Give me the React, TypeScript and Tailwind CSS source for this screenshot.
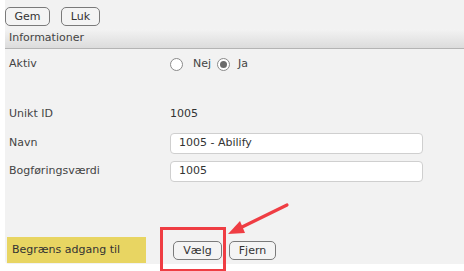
import React from "react";

const font = { fontFamily: "Verdana, 'DejaVu Sans', sans-serif" };

function Btn({ children, w }: { children: React.ReactNode; w: string }) {
  return (
    <button className={`${w} h-[19px] rounded-[5px] border border-[#7a7a7a] bg-[#f4f4f4] text-[11px] leading-none text-[#333] flex items-center justify-center`}>
      {children}
    </button>
  );
}

function Radio({ checked }: { checked?: boolean }) {
  return (
    <span className="w-[13px] h-[13px] rounded-full border border-[#8a8a8a] bg-white flex items-center justify-center">
      {checked && <span className="w-[7px] h-[7px] rounded-full bg-[#6b6b6b]" />}
    </span>
  );
}

export default function App() {
  return (
    <div className="w-[464px] h-[271px] bg-white overflow-hidden text-[11px] text-[#444]" style={font}>
      <div className="ml-[5px] h-[264px] bg-[#f2f2f2] rounded-bl-[4px] relative flex flex-col">
        <div className="flex gap-[11px] pt-[7px] h-[29px]">
          <Btn w="w-[45px]">Gem</Btn>
          <Btn w="w-[39px]">Luk</Btn>
        </div>
        <div className="h-[20px] bg-gradient-to-b from-[#f3f3f3] to-[#dcdcdc] border-b border-[#b4b4b4] pl-[4px] flex items-center text-[#444]">
          Informationer
        </div>
        <div className="flex items-center h-[28px] mt-[1px] pl-[4px]">
          <span className="w-[161px]">Aktiv</span>
          <div className="flex items-center">
            <Radio />
            <span className="ml-[10px]">Nej</span>
            <span className="ml-[6px]"><Radio checked /></span>
            <span className="ml-[8px]">Ja</span>
          </div>
        </div>
        <div className="h-[21px]" />
        <div className="flex items-center h-[30px] pl-[4px]">
          <span className="w-[161px]">Unikt ID</span>
          <span className="text-[#333]">1005</span>
        </div>
        <div className="flex items-center h-[28px] pl-[4px]">
          <span className="w-[161px]">Navn</span>
          <div className="w-[253px] h-[21px] bg-white border border-[#cfcfcf] rounded-[4px] pl-[8px] flex items-center text-[#333]">1005 - Abilify</div>
        </div>
        <div className="flex items-center h-[28px] pl-[4px]">
          <span className="w-[161px]">Bogføringsværdi</span>
          <div className="w-[253px] h-[21px] bg-white border border-[#cfcfcf] rounded-[4px] pl-[8px] flex items-center text-[#333]">1005</div>
        </div>
        <div className="flex-1" />
        <div className="flex items-center h-[26px] mb-[1px]">
          <div className="ml-[2px] w-[139px] h-[26px] bg-[#e8d562] flex items-center pl-[5px] text-[#333]">Begræns adgang til</div>
          <div className="ml-[27px] flex gap-[7px] relative">
            <Btn w="w-[49px]">Vælg</Btn>
            <Btn w="w-[47px]">Fjern</Btn>
            <div className="absolute left-[-13px] top-[-14px] w-[66px] h-[45px] border-[3px] border-[#ef3d43]" />
          </div>
        </div>
        <svg className="absolute left-0 top-0 pointer-events-none" width="464" height="271">
          <line x1="282" y1="205" x2="233" y2="229" stroke="#ef3d43" strokeWidth="3.2" strokeLinecap="round" />
          <polygon points="223,234 235,221 240,233" fill="#ef3d43" />
        </svg>
      </div>
    </div>
  );
}
